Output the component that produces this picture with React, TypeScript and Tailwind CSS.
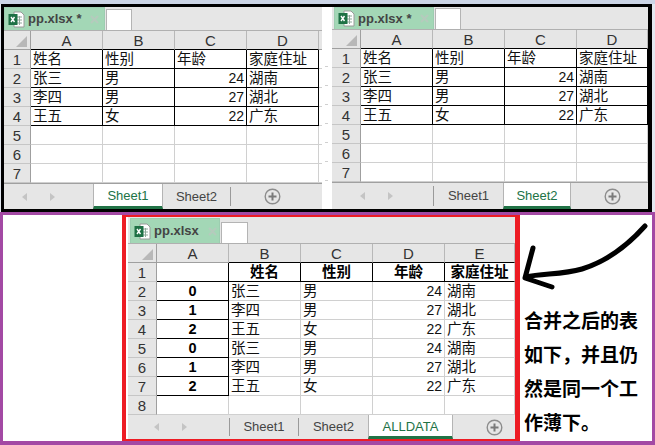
const cjk = "font-['Liberation_Sans','Noto_Sans_CJK_SC',sans-serif]";

type Cell = { text?: string; right?: boolean; strong?: boolean; black?: boolean; blackRight?: boolean };

const people = [
  ["张三", "男", "24", "湖南"],
  ["李四", "男", "27", "湖北"],
  ["王五", "女", "22", "广东"],
];

const ExcelIcon = () => (
  <svg width="17" height="17" viewBox="0 0 17 17" className="shrink-0">
    <path d="M6 1h7l3 3v12H6z" fill="#fff" stroke="#9a9a9a" />
    <path d="M9 6h5M9 9h5M9 12h5M11.5 5v9" stroke="#8fa89a" fill="none" />
    <rect x="0.5" y="3" width="9" height="11" fill="#1e7145" />
    <path d="M3 6l3.5 5M6.5 6L3 11" stroke="#fff" strokeWidth="1.4" fill="none" />
  </svg>
);

const CloseIcon = ({ className }: { className: string }) => (
  <svg width="9" height="9" viewBox="0 0 9 9" className={`shrink-0 ${className}`}>
    <path d="M1 1l7 7M8 1L1 8" stroke="#b5cbbd" strokeWidth="2" fill="none" />
  </svg>
);

const PlusButton = () => (
  <svg width="17" height="17" viewBox="0 0 17 17">
    <circle cx="8.5" cy="8.5" r="7.3" fill="none" stroke="#8c8c8c" strokeWidth="1.4" />
    <path d="M8.5 4.5v8M4.5 8.5h8" stroke="#7a7a7a" strokeWidth="2" fill="none" />
  </svg>
);

const ScrollArrows = ({ className }: { className: string }) => (
  <div className={`flex items-center ${className}`}>
    <span className="h-0 w-0 border-y-[4px] border-r-[5px] border-y-transparent border-r-[#c4c4c4]" />
    <span className="h-0 w-0 border-y-[4px] border-l-[5px] border-y-transparent border-l-[#c4c4c4]" />
  </div>
);

const FileTab = ({ title, closeClass, tabClass, boxClass }: { title: string; closeClass: string; tabClass: string; boxClass: string }) => (
  <div className="flex h-full items-end">
    <div className={`flex h-full shrink-0 items-center border border-b-0 border-[#9ccdb0] bg-[#a3d7b6] pl-[3px] ${tabClass}`}>
      <ExcelIcon />
      <span className="ml-[3px] text-[13px] font-bold whitespace-nowrap text-[#444]">{title}</span>
      <CloseIcon className={closeClass} />
    </div>
    <div className={`shrink-0 border border-b-0 border-[#b4b4b4] bg-white ${boxClass}`} />
  </div>
);

const Sheet = ({
  title,
  closeClass,
  tabClass,
  boxClass,
  grid,
  tabBar,
  tabRow,
  columns,
  rows,
  trailing,
  className,
}: {
  title: string;
  closeClass: string;
  tabClass: string;
  boxClass: string;
  grid: string;
  tabBar: React.ReactNode;
  tabRow: string;
  columns: string[];
  rows: Cell[][];
  trailing?: boolean;
  className: string;
}) => (
  <div className={`flex flex-col overflow-hidden bg-white ${cjk} ${className}`}>
    <div className={`shrink-0 bg-[#e6e6e6] ${tabRow}`}>
      <FileTab title={title} closeClass={closeClass} tabClass={tabClass} boxClass={boxClass} />
    </div>
    <div className={`grid ${grid} h-[20px] shrink-0 border-t border-[#b0b0b0] bg-[#e6e6e6]`}>
      <div className="flex items-end justify-end border-r border-b border-[#9f9f9f] pr-[3px] pb-[2px]">
        <span className="h-0 w-0 border-b-[11px] border-l-[11px] border-b-[#b8b8b8] border-l-transparent" />
      </div>
      {columns.map((c) => (
        <div key={c} className={`flex items-center justify-center border-r border-b border-r-[#b8b8b8] text-[15px] leading-none text-[#333] ${c === "A" && columns.length === 5 ? "border-b-[#9f9f9f]" : "border-b-black"}`}>
          {c}
        </div>
      ))}
      {trailing && <div className="border-b border-[#9f9f9f]" />}
    </div>
    {rows.map((row, i) => (
      <div key={i} className={`grid ${grid} h-[19px] shrink-0`}>
        <div className="flex items-center justify-center border-r border-b border-r-[#9f9f9f] border-b-[#c6c6c6] bg-[#e6e6e6] text-[15px] leading-none text-[#333]">
          {i + 1}
        </div>
        {row.map((cell, j) => (
          <div
            key={j}
            className={`flex items-center overflow-hidden whitespace-nowrap border-r border-b leading-none text-[#111] ${
              cell.black ? "border-b-black" : "border-b-[#d0d0d0]"
            } ${cell.blackRight ? "border-r-black" : "border-r-[#d0d0d0]"} ${
              cell.right
                ? "justify-end pr-[2px] text-[14px]"
                : cell.strong
                  ? "justify-center text-[14.5px] font-bold text-black"
                  : "justify-start pl-[2px] text-[14.5px]"
            }`}
          >
            {cell.text}
          </div>
        ))}
        {trailing && <div className="border-b border-[#d0d0d0]" />}
      </div>
    ))}
    <div className="min-h-0 flex-1">{tabBar}</div>
  </div>
);

const SheetTab = ({ label, active, className }: { label: string; active?: boolean; className: string }) => (
  <div
    className={`flex h-full shrink-0 items-center justify-center text-[13px] ${
      active ? "border-x border-[#b4b4b4] border-b-[3px] border-b-[#217346] bg-white pt-[2px] text-[#217346]" : "text-[#444]"
    } ${className}`}
  >
    {label}
  </div>
);

const Sep = () => <div className="my-[3px] w-px shrink-0 self-stretch bg-[#9a9a9a]" />;

const topRows: Cell[][] = [
  [
    { text: "姓名", black: true, blackRight: true },
    { text: "性别", black: true, blackRight: true },
    { text: "年龄", black: true, blackRight: true },
    { text: "家庭住址", black: true, blackRight: true },
  ],
  ...people.map((p) => [
    { text: p[0], black: true, blackRight: true },
    { text: p[1], black: true, blackRight: true },
    { text: p[2], right: true, black: true, blackRight: true },
    { text: p[3], black: true, blackRight: true },
  ]),
  [{}, {}, {}, {}],
  [{}, {}, {}, {}],
  [{}, {}, {}, {}],
];

const mergedRows: Cell[][] = [
  [
    { black: true, blackRight: true },
    { text: "姓名", strong: true, black: true, blackRight: true },
    { text: "性别", strong: true, black: true, blackRight: true },
    { text: "年龄", strong: true, black: true, blackRight: true },
    { text: "家庭住址", strong: true, black: true },
  ],
  ...[...people, ...people].map((p, i) => [
    { text: String(i % 3), strong: true, black: true, blackRight: true },
    { text: p[0] },
    { text: p[1] },
    { text: p[2], right: true },
    { text: p[3] },
  ]),
  [{}, {}, {}, {}, {}],
];

export default function App() {
  return (
    <div className="flex h-[445px] w-[655px] flex-col overflow-hidden bg-[#e3e8f0]">
      <div className="h-1 shrink-0 bg-[#ccd5e6]" />
      <div className="ml-px flex h-[208px] w-[651px] shrink-0 border-x-[3px] border-t-[3px] border-b-[3px] border-r-4 border-black bg-white">
        <Sheet
          className="h-full w-[318px]"
          title="pp.xlsx *"
          closeClass="ml-[9px]"
          tabClass="w-[101px]"
          boxClass="ml-px h-[21px] w-[26px]"
          tabRow="h-[23px]"
          grid="grid-cols-[27px_72px_72px_72px_72px_3px]"
          columns={["A", "B", "C", "D"]}
          rows={topRows}
          trailing
          tabBar={
            <div className="flex h-full items-center border-t border-[#a0a0a0] bg-[#e6e6e6]">
              <ScrollArrows className="ml-[18px] w-[33px] justify-between" />
              <SheetTab label="Sheet1" active className="ml-[38px] w-[70px]" />
              <SheetTab label="Sheet2" className="w-[67px]" />
              <Sep />
              <div className="ml-[33px]">
                <PlusButton />
              </div>
            </div>
          }
        />
        <div className="flex w-[10px] flex-col pt-[41px]">
          {[0, 1, 2, 3, 4, 5, 6].map((n) => (
            <div key={n} className="ml-[3px] h-[19px] w-[3px] border-b border-[#d0d0d0]" />
          ))}
        </div>
        <Sheet
          className="h-full w-[316px]"
          title="pp.xlsx *"
          closeClass="ml-[9px]"
          tabClass="ml-[2px] w-[100px]"
          boxClass="ml-px h-[21px] w-[26px]"
          tabRow="h-[22px]"
          grid="grid-cols-[29px_72px_72px_72px_71px]"
          columns={["A", "B", "C", "D"]}
          rows={topRows}
          tabBar={
            <div className="flex h-full items-center border-t border-[#a0a0a0] bg-[#e6e6e6]">
              <ScrollArrows className="ml-[28px] w-[33px] justify-between" />
              <div className="ml-[40px]" />
              <Sep />
              <SheetTab label="Sheet1" className="w-[69px]" />
              <SheetTab label="Sheet2" active className="w-[68px]" />
              <div className="ml-[33px]">
                <PlusButton />
              </div>
            </div>
          }
        />
      </div>
      <div className="flex min-h-0 flex-1 border-x-[3px] border-t-[3px] border-b-4 border-[#a349a4] bg-white">
        <div className="w-[119px] shrink-0" />
        <div className="flex w-[398px] shrink-0 border-y-2 border-r-[5px] border-l-4 border-[#ed1c24] pl-[2px]">
          <Sheet
            className="h-full w-[387px]"
            title="pp.xlsx"
            closeClass="ml-[9px]"
            tabClass="ml-[2px] w-[90px]"
            boxClass="ml-px h-[21px] w-[27px]"
            tabRow="h-[26px] pt-px"
            grid="grid-cols-[29px_72px_72px_72px_72px_70px]"
            columns={["A", "B", "C", "D", "E"]}
            rows={mergedRows}
            tabBar={
              <div className="flex h-full items-center bg-[#e6e6e6]">
                <ScrollArrows className="ml-[26px] w-[33px] justify-between" />
                <div className="ml-[42px]" />
                <Sep />
                <SheetTab label="Sheet1" className="w-[68px]" />
                <Sep />
                <SheetTab label="Sheet2" className="w-[69px]" />
                <SheetTab label="ALLDATA" active className="w-[85px]" />
                <div className="ml-[33px]">
                  <PlusButton />
                </div>
              </div>
            }
          />
        </div>
        <div className="flex min-w-0 flex-1 flex-col">
          <svg width="132" height="88" viewBox="0 0 132 88" className="block shrink-0">
            <path
              d="M125 11C108 30 88 46 62 54C42 60 22 58 6 62M13 33L5 63L32 72"
              fill="none"
              stroke="#000"
              strokeWidth="5"
              strokeLinecap="round"
              strokeLinejoin="round"
            />
          </svg>
          <div className="pl-[4px] font-['Noto_Sans_CJK_SC',sans-serif] text-[19px] leading-[34px] font-bold whitespace-nowrap text-black">
            <div>合并之后的表</div>
            <div>如下，并且仍</div>
            <div>然是同一个工</div>
            <div>作薄下。</div>
          </div>
        </div>
      </div>
    </div>
  );
}
